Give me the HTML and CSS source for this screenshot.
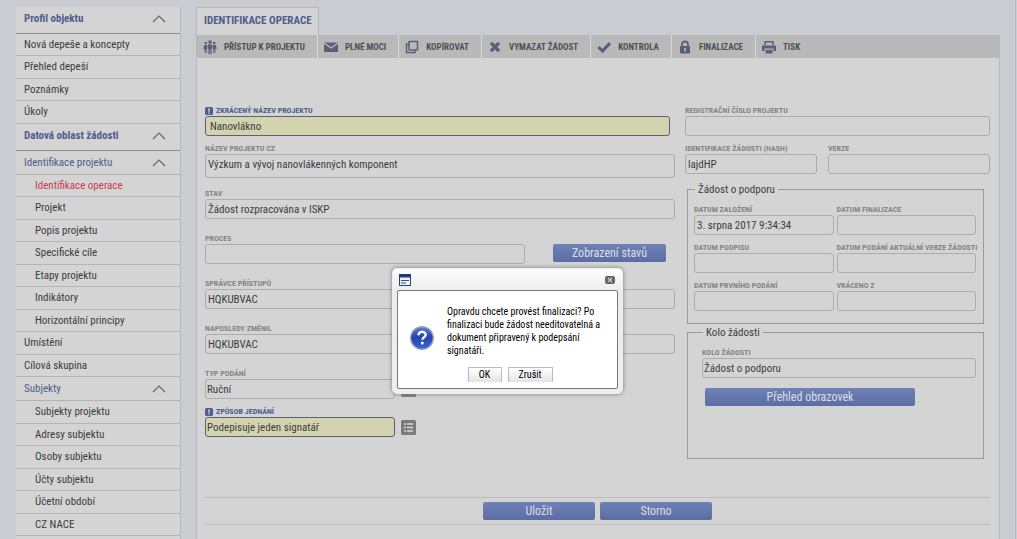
FILE: index.html
```html
<!DOCTYPE html>
<html lang="cs">
<head>
<meta charset="utf-8">
<title>Identifikace operace</title>
<link rel="stylesheet" href="styles.css">
</head>
<body>
<svg class="sprite" aria-hidden="true">
  <symbol id="chevron" viewBox="0 0 14 8"><path d="M1 7l6-6 6 6" fill="none" stroke="currentColor" stroke-width="1.2"/></symbol>
  <symbol id="list" viewBox="0 0 15 15"><rect width="15" height="15" rx="1.5" fill="#7b7b7b"/><path d="M3 4h2M6 4h6M3 7.5h2M6 7.5h6M3 11h2M6 11h6" stroke="#d8d8d8" stroke-width="1.5"/></symbol>
  <symbol id="required" viewBox="0 0 8 8"><rect width="8" height="8" rx="1.5" fill="#4d5e8e"/><path d="M4 1.3v3.4M4 5.5v1.3" stroke="#d4d4d4" stroke-width="1.4"/></symbol>
</svg>
<div class="page">
  <nav class="sidebar">
    <button class="section">Profil objektu<svg class="chevron"><use href="#chevron"/></svg></button>
    <ul class="menu">
      <li><a href="#">Nová depeše a koncepty</a></li>
      <li><a href="#">Přehled depeší</a></li>
      <li><a href="#">Poznámky</a></li>
      <li><a href="#">Úkoly</a></li>
    </ul>
    <button class="section">Datová oblast žádosti<svg class="chevron"><use href="#chevron"/></svg></button>
    <button class="section subsection">Identifikace projektu<svg class="chevron"><use href="#chevron"/></svg></button>
    <ul class="menu">
      <li class="nested"><a class="current" href="#">Identifikace operace</a></li>
      <li class="nested"><a href="#">Projekt</a></li>
      <li class="nested"><a href="#">Popis projektu</a></li>
      <li class="nested"><a href="#">Specifické cíle</a></li>
      <li class="nested"><a href="#">Etapy projektu</a></li>
      <li class="nested"><a href="#">Indikátory</a></li>
      <li class="nested"><a href="#">Horizontální principy</a></li>
      <li><a href="#">Umístění</a></li>
      <li><a href="#">Cílová skupina</a></li>
    </ul>
    <button class="section subsection">Subjekty<svg class="chevron"><use href="#chevron"/></svg></button>
    <ul class="menu menu-late">
      <li class="nested"><a href="#">Subjekty projektu</a></li>
      <li class="nested"><a href="#">Adresy subjektu</a></li>
      <li class="nested"><a href="#">Osoby subjektu</a></li>
      <li class="nested"><a href="#">Účty subjektu</a></li>
      <li class="nested"><a href="#">Účetní období</a></li>
      <li class="nested"><a href="#">CZ NACE</a></li>
    </ul>
  </nav>
  <main class="content">
    <h1 class="tab">IDENTIFIKACE OPERACE</h1>
    <div class="panel">
      <div class="toolbar">
        <button class="tool"><svg class="icon" viewBox="0 0 14 14" fill="currentColor"><circle cx="7" cy="2" r="1.8"/><circle cx="2.800" cy="3" r="1.300"/><circle cx="11.200" cy="3" r="1.300"/><path d="M5.300 4.300h3.400l.8 4.200-.9.300V14H7.300V9.500h-.6V14H5.400V8.800l-.9-.3zM1.200 5h3.300L3.800 9.200V13H3.100v-3h-.5v3H1.600V8.800L.8 9 .2 8.700zM9.500 5h3.300l1 3.700-.6.3-.8-.2V13h-1v-3h-.5v3h-.7V9.200z"/></svg>PŘÍSTUP K PROJEKTU</button>
        <button class="tool"><svg class="icon" viewBox="0 0 14 14"><path d="M0 2.500h14V12H0z" fill="currentColor"/><path d="M0 3l7 5 7-5" fill="none" stroke="#bcbcbc" stroke-width="1.300"/></svg>PLNÉ MOCI</button>
        <button class="tool"><svg class="icon" viewBox="0 0 14 14" fill="none" stroke="currentColor" stroke-width="1.500"><rect x="4" y="1.500" width="8.500" height="8.500" rx=".5"/><path d="M4 4H1.500v8.500H10V10"/></svg>KOPÍROVAT</button>
        <button class="tool"><svg class="icon" viewBox="0 0 14 14"><path d="M3 2.800l8 8.400M11 2.800l-8 8.400" stroke="currentColor" stroke-width="3.400"/></svg>VYMAZAT ŽÁDOST</button>
        <button class="tool"><svg class="icon" viewBox="0 0 14 14"><path d="M1.500 7l4 4 7.500-8" fill="none" stroke="currentColor" stroke-width="3"/></svg>KONTROLA</button>
        <button class="tool"><svg class="icon" viewBox="0 0 14 14"><path d="M4 7V4.500a3 3 0 0 1 6 0V7" fill="none" stroke="currentColor" stroke-width="1.800"/><rect x="2" y="6" width="10" height="7.500" rx="1" fill="currentColor"/><path d="M7 8v3.500" stroke="#bcbcbc" stroke-width="1.500"/></svg>FINALIZACE</button>
        <button class="tool"><svg class="icon" viewBox="0 0 14 14"><path d="M3 5V1.800h8V5" fill="none" stroke="currentColor" stroke-width="1.500"/><path d="M0 5.500h14V11h-2.500V8.500h-9V11H0z" fill="currentColor"/><path d="M3.500 9.800h7v3.700h-7z" fill="currentColor"/></svg>TISK</button>
      </div>
      <form class="form">
        <div class="columns">
          <div class="left">
            <div class="field short-name"><label class="label required" for="short"><svg class="mark"><use href="#required"/></svg>ZKRÁCENÝ NÁZEV PROJEKTU</label><input class="input needed roomy" id="short" value="Nanovlákno"></div>
            <div class="field gap-s"><label class="label" for="name">NÁZEV PROJEKTU CZ</label><input class="input tall" id="name" value="Výzkum a vývoj nanovlákenných komponent"></div>
            <div class="field gap-m"><label class="label" for="state">STAV</label><input class="input" id="state" value="Žádost rozpracována v ISKP"></div>
            <div class="field gap-l"><label class="label" for="process">PROCES</label>
              <div class="process-row"><input class="input" id="process"><button type="button" class="button">Zobrazení stavů</button></div></div>
            <div class="field gap-l"><label class="label" for="admin">SPRÁVCE PŘÍSTUPŮ</label><input class="input" id="admin" value="HQKUBVAC"></div>
            <div class="field gap-l"><label class="label" for="changed">NAPOSLEDY ZMĚNIL</label><input class="input" id="changed" value="HQKUBVAC"></div>
            <div class="field gap-l"><label class="label" for="type">TYP PODÁNÍ</label>
              <div class="pick-row"><input class="input snug" id="type" value="Ruční"><button type="button" class="pick" aria-label="Vybrat typ podání"><svg class="pick-icon"><use href="#list"/></svg></button></div></div>
            <div class="field gap-s"><label class="label required" for="manner"><svg class="mark"><use href="#required"/></svg>ZPŮSOB JEDNÁNÍ</label>
              <div class="pick-row"><input class="input snug needed" id="manner" value="Podepisuje jeden signatář"><button type="button" class="pick" aria-label="Vybrat způsob jednání"><svg class="pick-icon"><use href="#list"/></svg></button></div></div>
          </div>
          <div class="right">
            <div class="field"><label class="label" for="reg">REGISTRAČNÍ ČÍSLO PROJEKTU</label><input class="input" id="reg"></div>
            <div class="hash-row gap-s">
              <div class="field"><label class="label" for="hash">IDENTIFIKACE ŽÁDOSTI (HASH)</label><input class="input" id="hash" value="lajdHP"></div>
              <div class="field"><label class="label" for="version">VERZE</label><input class="input" id="version"></div>
            </div>
            <fieldset class="group"><legend class="legend">Žádost o podporu</legend>
              <div class="dates">
                <div class="field"><label class="label" for="d1">DATUM ZALOŽENÍ</label><input class="input" id="d1" value="3. srpna 2017 9:34:34"></div>
                <div class="field"><label class="label" for="d2">DATUM FINALIZACE</label><input class="input" id="d2"></div>
                <div class="field"><label class="label" for="d3">DATUM PODPISU</label><input class="input" id="d3"></div>
                <div class="field"><label class="label" for="d4">DATUM PODÁNÍ AKTUÁLNÍ VERZE ŽÁDOSTI</label><input class="input" id="d4"></div>
                <div class="field"><label class="label" for="d5">DATUM PRVNÍHO PODÁNÍ</label><input class="input" id="d5"></div>
                <div class="field"><label class="label" for="d6">VRÁCENO Z</label><input class="input" id="d6"></div>
              </div>
            </fieldset>
            <fieldset class="group round"><legend class="legend">Kolo žádosti</legend>
              <div class="field"><label class="label" for="round">KOLO ŽÁDOSTI</label><input class="input snug" id="round" value="Žádost o podporu"></div>
              <button type="button" class="button overview">Přehled obrazovek</button>
            </fieldset>
          </div>
        </div>
        <div class="actions"><button type="button" class="button">Uložit</button><button type="button" class="button">Storno</button></div>
      </form>
    </div>
  </main>
</div>
<dialog open class="dialog" aria-describedby="question">
  <div class="dialog-bar">
    <svg class="window-icon" viewBox="0 0 12 12"><rect x=".5" y=".5" width="11" height="11" fill="#eef2fb" stroke="#24427e"/><path d="M0 0h12v3.500H0z" fill="#1d3c7c"/><path d="M2 6.500h8M2 9h5" stroke="#34558f"/></svg>
    <button class="close" aria-label="Zavřít"><svg class="close-icon" viewBox="0 0 10 8"><rect width="10" height="8" rx="2" fill="#666"/><path d="M3 2l4 4M7 2L3 6" stroke="#ccc" stroke-width="1.200"/></svg></button>
  </div>
  <div class="dialog-body">
    <div class="message">
      <svg class="question-icon" viewBox="0 0 24 24"><defs><linearGradient id="ball" x1="0" y1="0" x2="0" y2="1"><stop offset="0" stop-color="#6482d8"/><stop offset=".45" stop-color="#2544a8"/><stop offset="1" stop-color="#3267dc"/></linearGradient></defs><circle cx="12" cy="12" r="11.300" fill="url(#ball)" stroke="#9aa3b8" stroke-width="1.400"/><path d="M8.500 9.300c0-4.600 7.200-4.300 7.200-.5 0 2.600-3.300 2.400-3.300 5" fill="none" stroke="#fff" stroke-width="2.300"/><circle cx="12.300" cy="17" r="1.500" fill="#fff"/></svg>
      <p class="question" id="question">Opravdu chcete provést finalizaci? Po finalizaci bude žádost needitovatelná a dokument připravený k podepsání signatáři.</p>
    </div>
    <div class="dialog-actions"><button class="plain">OK</button><button class="plain wide">Zrušit</button></div>
  </div>
</dialog>
</body>
</html>
```
FILE: styles.css
```css
* { box-sizing: border-box; }
body {
  margin: 0;
  background: #cbccd2;
  color: #3c3c3c;
  font: 11px/16px "Roboto Condensed", "Liberation Sans Narrow", Roboto, sans-serif;
}
button, input { font: inherit; color: inherit; }
button { cursor: pointer; }
.sprite { position: absolute; width: 0; height: 0; }
.page {
  display: flex;
  gap: 15px;
  min-height: 100vh;
  margin: 0 1px 0 3px;
  padding: 7px 15px 0 13px;
  border-right: 1px solid #b4b8c8;
}

.sidebar {
  flex: none;
  width: 165px;
  background: #d4d4d4;
  border-right: 1px solid #b9b9bd;
}
.section {
  display: flex;
  align-items: center;
  justify-content: space-between;
  width: 100%;
  height: 27px;
  padding: 0 14px 2px 8px;
  border: 0;
  border-bottom: 1px solid #8c8c8c;
  background: none;
  color: #4d5e8e;
  font-weight: bold;
}
.subsection {
  height: 24px;
  padding-bottom: 0;
  border-color: #b2b2b2;
  font-weight: normal;
}
.chevron { width: 14px; height: 8px; color: #666; }
.menu {
  display: grid;
  grid-auto-rows: 22px 23px;
  margin: 0;
  padding: 0;
  list-style: none;
}
.menu-late { grid-auto-rows: 23px 22px; }
.menu li {
  display: flex;
  align-items: center;
  padding-left: 8px;
  border-bottom: 1px solid #b6b6b6;
}
.menu .nested { padding-left: 19px; }
.menu a { color: inherit; text-decoration: none; }
.menu .current { color: #c83c4c; }

.content { display: flex; flex-direction: column; flex: 1; min-width: 0; }
.tab {
  align-self: flex-start;
  margin: 0;
  padding: 5px 6px 6px 7px;
  border: 1px solid #b9b9bd;
  border-bottom: 0;
  background: #d4d4d4;
  color: #4d5e8e;
  font-size: 11px;
  line-height: 16px;
}
.panel {
  flex: 1;
  border: 1px solid #b9b9bd;
  border-width: 0 1px;
  background: #d4d4d4;
}
.toolbar { display: flex; height: 23px; background: #b9b9b9; }
.tool {
  display: flex;
  align-items: center;
  gap: 7px;
  padding: 0 12px 0 6px;
  border: 0;
  border-right: 1px solid #d8d8d8;
  background: none;
  color: #505050;
  font-size: 9px;
  font-weight: bold;
  white-space: nowrap;
}
.tool:last-child { border: 0; }
.icon { width: 14px; height: 14px; color: #596075; }

.form { padding: 47px 9px 0 8px; }
.columns { display: grid; grid-template-columns: 470fr 305fr; gap: 10px; }
.label {
  display: block;
  height: 11px;
  color: #858585;
  font-size: 8px;
  font-weight: bold;
  line-height: 11px;
  white-space: nowrap;
}
.required { display: flex; align-items: center; gap: 3px; color: #4d5e8e; }
.mark { width: 8px; height: 8px; }
.input {
  display: block;
  width: 100%;
  height: 20px;
  padding: 0 2px;
  border: 1px solid #acacac;
  border-radius: 3px;
  background: transparent;
}
.snug { padding: 0 1px; }
.roomy { padding: 0 4px; }
.tall { height: 24px; padding-bottom: 3px; }
.needed { border-color: #5c6370; background: #d4d3b0; }
.short-name { margin-right: 5px; }
.gap-s { margin-top: 7px; }
.gap-m { margin-top: 10px; }
.gap-l { margin-top: 14px; }
.button {
  height: 18px;
  padding: 0;
  border: 0;
  border-radius: 2px;
  background: linear-gradient(#6e82b6, #5c6da2);
  color: #dcdfe8;
  font-size: 12px;
  line-height: 18px;
}
.process-row { display: grid; grid-template-columns: 320fr 113fr; gap: 28px; margin-right: 9px; }
.pick-row { display: flex; align-items: center; gap: 6px; }
.pick-row .input { width: 190px; }
.pick { display: flex; padding: 0; border: 0; background: none; }
.pick-icon { width: 15px; height: 15px; }
.hash-row { display: grid; grid-template-columns: 132fr 162fr; gap: 11px; }
.group {
  min-width: 0;
  margin: 11px 6px 0 2px;
  padding: 10px 7px 12px 6px;
  border: 1px solid #999;
}
.legend { height: 9px; padding: 0 3px; margin-left: 1px; line-height: 9px; }
.dates { display: grid; grid-template-columns: minmax(0, 1fr) minmax(0, 1fr); gap: 7px 3px; }
.round { margin-top: 4px; padding: 10px 7px 52px 14px; }
.overview { display: block; width: 210px; margin: 10px 0 0 3px; }
.actions {
  display: flex;
  justify-content: center;
  gap: 5px;
  margin: 38px 0 0;
  padding: 4px 0;
  border: 1px solid #bbb;
  border-width: 1px 0;
}
.actions .button { width: 112px; }

.dialog {
  position: absolute;
  top: 268px;
  left: 392px;
  width: 231px;
  margin: 0;
  padding: 0 4px 4px;
  border: 1px solid #eee;
  border-radius: 5px;
  background: linear-gradient(#fff, #ececec 22px, #eee);
  box-shadow: 0 0 4px #777;
  color: #000;
}
.dialog-bar { display: flex; align-items: center; justify-content: space-between; height: 21px; padding: 0 3px 0 2px; }
.window-icon { width: 12px; height: 12px; }
.close { display: flex; padding: 0; border: 0; background: none; }
.close-icon { width: 10px; height: 8px; }
.dialog-body { padding: 14px 12px 6px; border: 1px solid #777; border-radius: 2px; background: #fff; }
.message { display: flex; align-items: flex-end; gap: 13px; }
.question-icon { flex: none; width: 24px; height: 24px; margin-bottom: 7px; }
.question { margin: 0; font-size: 10px; line-height: 13px; }
.dialog-actions { display: flex; justify-content: center; gap: 6px; margin: 10px 0 0 5px; }
.plain {
  width: 34px;
  height: 15px;
  padding: 0;
  border: 1px solid #bbb;
  border-bottom: 0;
  background: linear-gradient(#fff, #e4e4e4);
  font-size: 10px;
  line-height: 14px;
}
.wide { width: 45px; }
```
